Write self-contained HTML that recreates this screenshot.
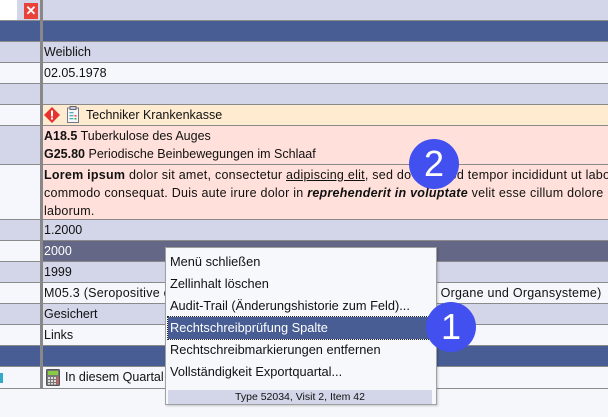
<!DOCTYPE html>
<html><head><meta charset="utf-8"><style>
*{margin:0;padding:0;box-sizing:border-box}
body{width:608px;height:417px;background:#f6f7fb;position:relative;overflow:hidden;font-family:"Segoe UI","Liberation Sans","DejaVu Sans",sans-serif;font-size:12.5px;color:#111}
.r{position:absolute;left:0;width:608px;border-bottom:1px solid #8a8a8a}
.l{position:absolute;left:0;top:0;bottom:0;width:40px}
.c{position:absolute;left:43px;top:0;bottom:0;right:0;padding-left:1px;line-height:20px;white-space:nowrap;overflow:hidden}
.vl{position:absolute;left:40px;top:0;width:3px;height:389px;background:#888}
.menu{position:absolute;left:165px;top:247px;width:272px;height:158px;background:#f7f8fc;border:1px solid #a0a0a0;box-shadow:1px 1px 2px rgba(0,0,0,.2);font-size:12.8px}
.mi{position:absolute;left:4px;height:22px;line-height:22px;width:264px;white-space:nowrap}
.badge{position:absolute;width:50px;height:50px;border-radius:50%;background:#4150ef;color:#fff;font-size:36px;text-align:center;line-height:50px;font-family:"Liberation Sans",sans-serif}
</style></head><body>
<div class="r" style="top:0;height:21px;background:#d2d6e8"><div class="l" style="background:#fff;width:17px"></div>
<div style="position:absolute;left:24px;top:3px;width:14px;height:16px;background:#e8423a;color:#fff;font-size:13px;font-weight:bold;text-align:center;line-height:16px;font-family:'Liberation Sans',sans-serif">✕</div></div>
<div class="r" style="top:21px;height:21px;background:#475d94"></div>
<div class="r" style="top:42px;height:21px;background:#d2d6e8"><div class="c">Weiblich</div></div>
<div class="r" style="top:63px;height:21px;background:#f6f7fc"><div class="c">02.05.1978</div></div>
<div class="r" style="top:84px;height:21px;background:#d2d6e8"></div>
<div class="r" style="top:105px;height:21px;background:#ffecd0"><div class="l" style="background:#f6f7fc"></div><div class="c">
<svg width="16" height="16" viewBox="0 0 16 16" style="position:absolute;left:1px;top:2px"><path d="M8 0L16 8L8 16L0 8Z" fill="#e8322e"/><rect x="7" y="3.5" width="2" height="6" fill="#fff"/><rect x="7" y="10.5" width="2" height="2" fill="#fff"/></svg>
<svg width="12" height="17" viewBox="0 0 12 17" style="position:absolute;left:24px;top:1px"><rect x="0.5" y="2" width="11" height="14.5" fill="#f4f6f8" stroke="#778"/><rect x="3" y="0.5" width="6" height="3" fill="#ccd" stroke="#667"/><rect x="2.5" y="6" width="4" height="1.3" fill="#5ab"/><rect x="2.5" y="9" width="4" height="1.3" fill="#5ab"/><rect x="2.5" y="12" width="4" height="1.3" fill="#5ab"/><rect x="7.5" y="9" width="2" height="1.5" fill="#e44"/><rect x="7.5" y="12" width="2" height="1.5" fill="#4a4"/></svg>
<span style="margin-left:42px">Techniker Krankenkasse</span></div></div>
<div class="r" style="top:126px;height:39px;background:#ffe0da"><div class="l" style="background:#d2d6e8"></div><div class="c" style="line-height:18px;padding-top:1px"><b>A18.5</b> Tuberkulose des Auges<br><b>G25.80</b> Periodische Beinbewegungen im Schlaaf</div></div>
<div class="r" style="top:165px;height:55px;background:#ffe0da"><div class="l" style="background:#f6f7fc"></div><div class="c" style="line-height:18px;padding-top:1px;letter-spacing:0.25px"><b>Lorem ipsum</b> dolor sit amet, consectetur <u>adipiscing elit</u>, sed do eiusmod tempor incididunt ut labore<br>commodo consequat. Duis aute irure dolor in <b><i>reprehenderit in voluptate</i></b> velit esse cillum dolore<br>laborum.</div></div>
<div class="r" style="top:220px;height:21px;background:#d2d6e8"><div class="c">1.2000</div></div>
<div class="r" style="top:241px;height:21px;background:#646785"><div class="l" style="background:#f6f7fc"></div><div class="c" style="color:#fff">2000</div></div>
<div class="r" style="top:262px;height:21px;background:#d2d6e8"><div class="c">1999</div></div>
<div class="r" style="top:283px;height:21px;background:#f6f7fc"><div class="c" style="letter-spacing:0.25px">M05.3 (Seropositive chronische Polyarthritis mit Beteiligung anderer Organe und Organsysteme)</div></div>
<div class="r" style="top:304px;height:21px;background:#d2d6e8"><div class="c">Gesichert</div></div>
<div class="r" style="top:325px;height:21px;background:#f6f7fc"><div class="c">Links</div></div>
<div class="r" style="top:346px;height:21px;background:#475d94"></div>
<div class="r" style="top:367px;height:22px;background:#f6f7fc"><div style="position:absolute;left:0;top:6px;width:3px;height:10px;background:#3ac"></div><div class="c">
<svg width="14" height="17" viewBox="0 0 14 17" style="position:absolute;left:3px;top:2px"><rect x="0.5" y="0.5" width="13" height="16" rx="1" fill="#777" stroke="#555"/><rect x="2" y="2" width="10" height="4" fill="#8c4"/><g fill="#ddd"><rect x="2" y="8" width="2" height="2"/><rect x="5" y="8" width="2" height="2"/><rect x="8" y="8" width="2" height="2"/><rect x="2" y="11" width="2" height="2"/><rect x="5" y="11" width="2" height="2"/><rect x="8" y="11" width="2" height="2"/><rect x="2" y="14" width="2" height="1.5"/><rect x="5" y="14" width="2" height="1.5"/><rect x="8" y="14" width="2" height="1.5"/></g><rect x="11" y="8" width="1.5" height="7.5" fill="#e55"/></svg>
<span style="margin-left:21px">In diesem Quartal</span></div></div>
<div class="vl"></div>
<div class="menu">
<div class="mi" style="top:3px">Menü schließen</div>
<div class="mi" style="top:25px">Zellinhalt löschen</div>
<div class="mi" style="top:47px">Audit-Trail (Änderungshistorie zum Feld)...</div>
<div class="mi" style="top:69px;left:2px;width:264px;padding-left:2px;background:#475d94;color:#fff;outline:1px dotted #222">Rechtschreibprüfung Spalte</div>
<div class="mi" style="top:91px">Rechtschreibmarkierungen entfernen</div>
<div class="mi" style="top:113px">Vollständigkeit Exportquartal...</div>
<div style="position:absolute;left:2px;top:142px;width:264px;height:14px;background:#d2d6e8;font-size:10.5px;line-height:14px;text-align:center">Type 52034, Visit 2, Item 42</div>
</div>
<div class="badge" style="left:426px;top:302px">1</div>
<div class="badge" style="left:409px;top:139px">2</div>
</body></html>
